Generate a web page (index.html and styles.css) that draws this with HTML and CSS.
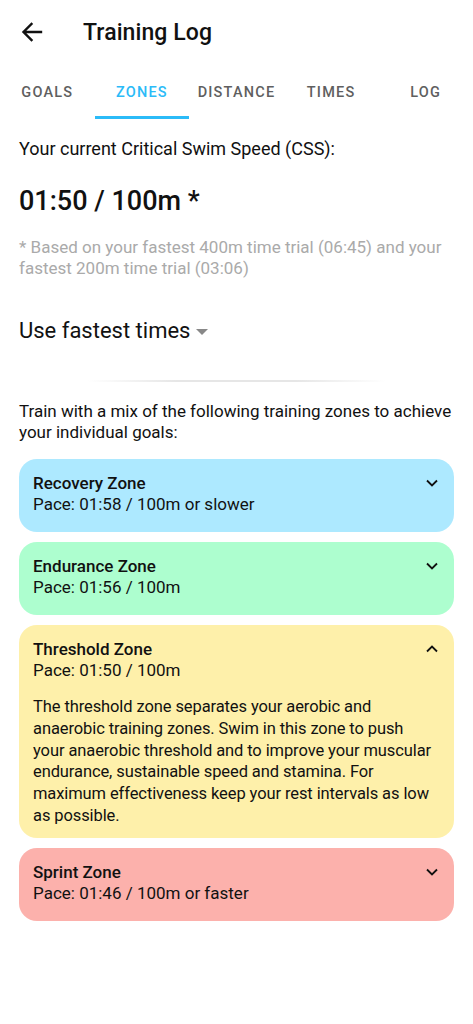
FILE: index.html
```html
<!DOCTYPE html>
<html lang="en">

<head>
  <meta charset="UTF-8">
  <meta name="viewport" content="width=device-width, initial-scale=1">
  <title>Training Log</title>
  <link rel="stylesheet" href="styles.css">
</head>

<body>
  <header class="appbar">
    <button class="back" aria-label="Back">
      <svg width="22" height="20" viewBox="0 0 22 20">
        <path d="M20 10H3M10.5 2L2.5 10l8 8" fill="none" stroke="#111" stroke-width="2.4" stroke-linecap="square"/>
      </svg>
    </button>
    <h1>Training Log</h1>
  </header>

  <nav class="tabs">
    <a class="tab">GOALS</a>
    <a class="tab active">ZONES</a>
    <a class="tab">DISTANCE</a>
    <a class="tab">TIMES</a>
    <a class="tab">LOG</a>
  </nav>

  <main class="content">
    <p class="lead">Your current Critical Swim Speed (CSS):</p>
    <p class="css">01:50 / 100m *</p>
    <p class="note">* Based on your fastest 400m time trial (06:45) and your fastest 200m time trial (03:06)</p>

    <div class="select">
      <span>Use fastest times</span>
      <span class="caret"></span>
    </div>

    <hr class="divider">

    <p class="intro">Train with a mix of the following training zones to achieve your individual goals:</p>

    <div class="zones">
      <section class="zone recovery">
        <div class="zone-head">
          <div>
            <h3>Recovery Zone</h3>
            <p>Pace: 01:58 / 100m or slower</p>
          </div>
          <svg class="chev" width="12" height="8" viewBox="0 0 12 8"><path d="M1 1.5l5 5 5-5" fill="none" stroke="#111" stroke-width="1.8"/></svg>
        </div>
      </section>

      <section class="zone endurance">
        <div class="zone-head">
          <div>
            <h3>Endurance Zone</h3>
            <p>Pace: 01:56 / 100m</p>
          </div>
          <svg class="chev" width="12" height="8" viewBox="0 0 12 8"><path d="M1 1.5l5 5 5-5" fill="none" stroke="#111" stroke-width="1.8"/></svg>
        </div>
      </section>

      <section class="zone threshold">
        <div class="zone-head">
          <div>
            <h3>Threshold Zone</h3>
            <p>Pace: 01:50 / 100m</p>
          </div>
          <svg class="chev" width="12" height="8" viewBox="0 0 12 8"><path d="M1 6.5l5-5 5 5" fill="none" stroke="#111" stroke-width="1.8"/></svg>
        </div>
        <p class="zone-text">The threshold zone separates your aerobic and anaerobic training zones. Swim in this zone to push your anaerobic threshold and to improve your muscular endurance, sustainable speed and stamina. For maximum effectiveness keep your rest intervals as low as possible.</p>
      </section>

      <section class="zone sprint">
        <div class="zone-head">
          <div>
            <h3>Sprint Zone</h3>
            <p>Pace: 01:46 / 100m or faster</p>
          </div>
          <svg class="chev" width="12" height="8" viewBox="0 0 12 8"><path d="M1 1.5l5 5 5-5" fill="none" stroke="#111" stroke-width="1.8"/></svg>
        </div>
      </section>
    </div>
  </main>
</body>

</html>
```

FILE: styles.css
```css
body {
  margin: 0;
  background-color: #FFFFFF;
  font-family: Roboto, "Noto Sans", sans-serif;
  color: #111111;
}

p {
  margin: 0;
}

/* barra superior */
.appbar {
  height: 64px;
  display: flex;
  align-items: center;
}

.back {
  border: none;
  background: transparent;
  padding: 0;
  margin-left: 21px;
  width: 22px;
  height: 20px;
  display: flex;
}

.appbar h1 {
  margin: 0 0 0 40px;
  font-size: 23px;
  font-weight: 500;
  letter-spacing: 0.1px;
}

/* abas */
.tabs {
  display: grid;
  grid-template-columns: repeat(5, 1fr);
  height: 55px;
}

.tab {
  display: flex;
  align-items: center;
  justify-content: center;
  padding-top: 4px;
  font-size: 14.5px;
  font-weight: 500;
  letter-spacing: 1.2px;
  color: #5F5F5F;
  border-bottom: 3px solid transparent;
}

.tab.active {
  color: #2BBBF8;
  border-bottom-color: #2BBBF8;
}

.content {
  padding: 0 19px 40px;
}

.lead {
  margin-top: 19px;
  font-size: 18px;
  line-height: 22px;
}

.css {
  margin-top: 25px;
  font-size: 27px;
  font-weight: 500;
  line-height: 32px;
}

.note {
  margin-top: 20px;
  font-size: 17px;
  line-height: 21px;
  color: #AAAAAA;
}

.select {
  margin-top: 38px;
  display: flex;
  align-items: center;
  font-size: 22px;
  line-height: 28px;
}

.caret {
  margin-left: 6px;
  margin-top: 1px;
  width: 0;
  height: 0;
  border-left: 6px solid transparent;
  border-right: 6px solid transparent;
  border-top: 6px solid #888888;
}

.divider {
  margin: 35px 68px 0;
  height: 2px;
  border: none;
  background: linear-gradient(to right, rgba(230, 230, 230, 0), #E6E6E6 30%, #E6E6E6 70%, rgba(230, 230, 230, 0));
}

.intro {
  margin-top: 19px;
  font-size: 17px;
  line-height: 21px;
}

/* zonas de treino */
.zones {
  margin-top: 16px;
  display: flex;
  flex-direction: column;
  gap: 10px;
}

.zone {
  border-radius: 18px;
  padding: 14px 16px 17px 14px;
}

.zone-head {
  display: flex;
  justify-content: space-between;
  align-items: flex-start;
}

.zone h3 {
  margin: 0;
  font-size: 17px;
  font-weight: 500;
  line-height: 21px;
}

.zone-head p {
  font-size: 17px;
  line-height: 21px;
}

.chev {
  margin-top: 6px;
}

.zone-text {
  margin: 15px 0 -6px;
  font-size: 16.5px;
  line-height: 21.8px;
  letter-spacing: -0.1px;
}

.recovery {
  background-color: #ADE9FF;
}

.endurance {
  background-color: #ADFECF;
}

.threshold {
  background-color: #FEF0AA;
}

.sprint {
  background-color: #FCB1AC;
}
```
